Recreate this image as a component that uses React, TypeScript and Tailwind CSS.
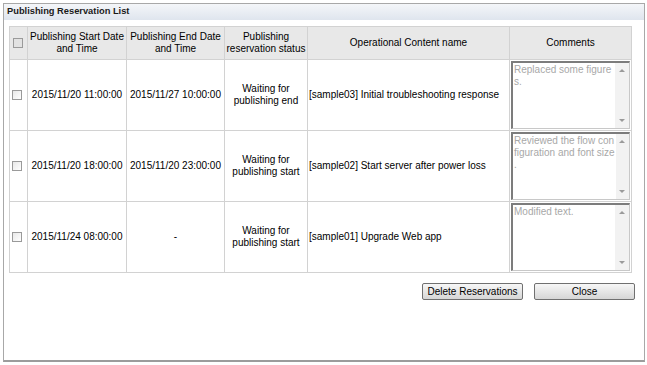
import React from "react";

type Row = {
  start: string;
  end: string;
  status: [string, string];
  name: string;
  comment: string[];
};

const rows: Row[] = [
  {
    start: "2015/11/20 11:00:00",
    end: "2015/11/27 10:00:00",
    status: ["Waiting for", "publishing end"],
    name: "[sample03] Initial troubleshooting response",
    comment: ["Replaced some figure", "s."],
  },
  {
    start: "2015/11/20 18:00:00",
    end: "2015/11/20 23:00:00",
    status: ["Waiting for", "publishing start"],
    name: "[sample02] Start server after power loss",
    comment: ["Reviewed the flow con", "figuration and font size", "."],
  },
  {
    start: "2015/11/24 08:00:00",
    end: "-",
    status: ["Waiting for", "publishing start"],
    name: "[sample01] Upgrade Web app",
    comment: ["Modified text."],
  },
];

function Check({ disabled }: { disabled?: boolean }) {
  return (
    <span
      className={
        "block w-[10px] h-[10px] border border-[#9a9a9a] " +
        (disabled ? "bg-[#e2e2e2]" : "bg-gradient-to-br from-[#e8e8e8] to-white")
      }
    />
  );
}

function Comment({ lines }: { lines: string[] }) {
  return (
    <div className="flex h-[68px] border border-[#c8c8c8] border-t-2 border-l-2 border-t-[#7c7c7c] border-l-[#7c7c7c] bg-white">
      <div className="flex-1 px-[1px] pt-[1px] text-[10px] leading-[12px] text-[#a8a8a8]">
        {lines.map((l, i) => (
          <div key={i} className="whitespace-nowrap">
            {l}
          </div>
        ))}
      </div>
      <div className="w-[14px] flex flex-col justify-between items-center py-[6px] bg-[#f2f2f2]">
        <span className="w-0 h-0 border-x-[3px] border-x-transparent border-b-[3px] border-b-[#9a9a9a]" />
        <span className="w-0 h-0 border-x-[3px] border-x-transparent border-t-[3px] border-t-[#9a9a9a]" />
      </div>
    </div>
  );
}

function Btn({ label }: { label: string }) {
  return (
    <button className="w-[101px] h-[17px] rounded-[2px] border border-[#707070] bg-gradient-to-b from-[#f7f7f7] to-[#d6d6d6] text-[10px] leading-none text-black">
      {label}
    </button>
  );
}

export default function App() {
  const cell = "border border-[#d2d2d2]";
  return (
    <div className="w-[647px] h-[365px] bg-white pt-[3px] pl-[3px] font-['Liberation_Sans',Arial,sans-serif] text-black">
      <div className="w-[642px] h-[359px] border border-[#a8a8a8] border-b-2 border-b-[#9c9c9c] flex flex-col">
        {/* title bar */}
        <div className="h-[16px] flex items-center pl-[3px] bg-gradient-to-b from-[#f4f6f9] to-[#dfe5ee]">
          <span className="text-[9.3px] font-bold text-[#1a1a1a]">Publishing Reservation List</span>
        </div>

        <div className="pl-[5px] pt-[6px]">
          <table className="table-fixed border-collapse w-[622px] text-[10px] leading-[12px]">
            <colgroup>
              <col className="w-[18px]" />
              <col className="w-[99px]" />
              <col className="w-[98px]" />
              <col className="w-[83px]" />
              <col className="w-[202px]" />
              <col className="w-[122px]" />
            </colgroup>
            <thead>
              <tr className="h-[33px] bg-[#e8e8e8] text-center">
                <th className={cell + " px-[3px]"}>
                  <Check disabled />
                </th>
                <th className={cell + " font-normal"}>
                  Publishing Start Date
                  <br />
                  and Time
                </th>
                <th className={cell + " font-normal"}>
                  Publishing End Date
                  <br />
                  and Time
                </th>
                <th className={cell + " font-normal"}>
                  Publishing
                  <br />
                  reservation status
                </th>
                <th className={cell + " font-normal"}>Operational Content name</th>
                <th className={cell + " font-normal"}>Comments</th>
              </tr>
            </thead>
            <tbody>
              {rows.map((r, i) => (
                <tr key={i} className="h-[71px]">
                  <td className={cell + " px-[2px]"}>
                    <Check />
                  </td>
                  <td className={cell + " text-center"}>{r.start}</td>
                  <td className={cell + " text-center"}>{r.end}</td>
                  <td className={cell + " text-center"}>
                    {r.status[0]}
                    <br />
                    {r.status[1]}
                  </td>
                  <td className={cell + " pl-[1px] whitespace-nowrap"}>{r.name}</td>
                  <td className={cell + " p-[1px]"}>
                    <Comment lines={r.comment} />
                  </td>
                </tr>
              ))}
            </tbody>
          </table>
        </div>

        <div className="flex justify-end gap-[11px] pr-[9px] pt-[10px]">
          <Btn label="Delete Reservations" />
          <Btn label="Close" />
        </div>
      </div>
    </div>
  );
}
